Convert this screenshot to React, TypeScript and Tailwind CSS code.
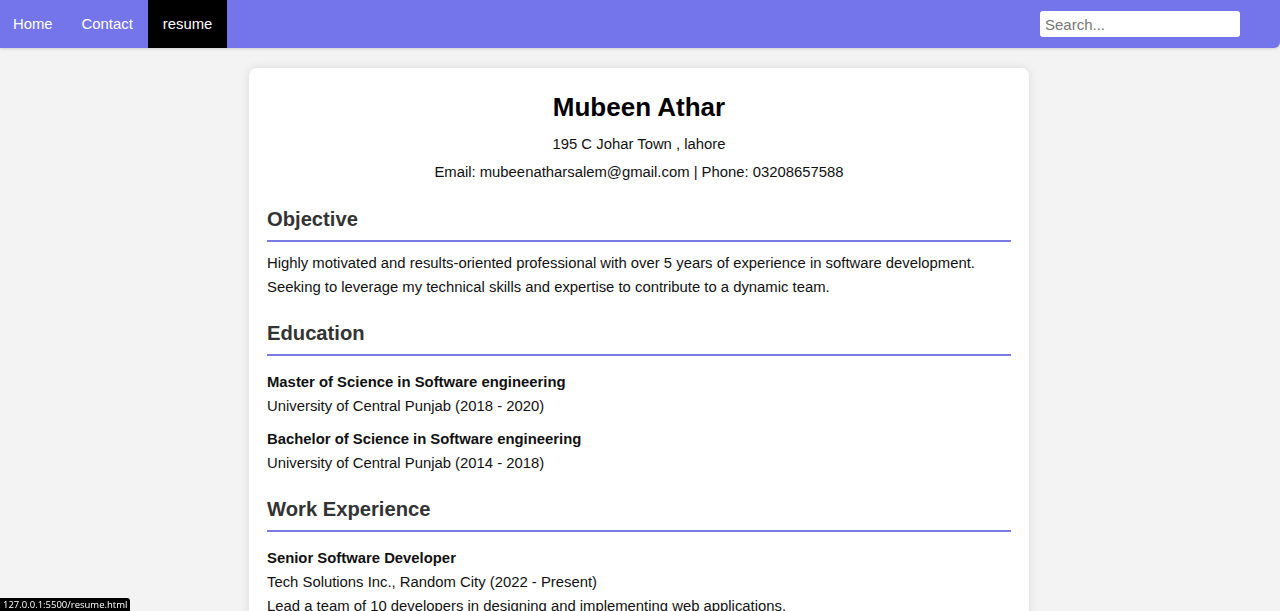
import React from "react";

export default function App() {
  const font = { fontFamily: '"Liberation Sans", Arial, sans-serif' };
  return (
    <div className="min-h-[611px] bg-[#f4f3f4] text-[14.85px] text-[#111]" style={font}>
      <nav className="flex h-[48px] items-stretch justify-between rounded-br-[6px] bg-[#7474eb] shadow-[0_1px_3px_rgba(0,0,0,0.15)]">
        <div className="flex items-stretch">
          <a className="flex items-center pl-[13px] pr-[14px] text-white">Home</a>
          <a className="flex items-center px-[15px] text-white">Contact</a>
          <a className="flex items-center bg-black px-[15px] text-white">resume</a>
        </div>
        <div className="flex items-center pr-[40px]">
          <input
            className="h-[26px] w-[200px] rounded-[3px] bg-white px-[5px] text-[15px] text-[#333] outline-none placeholder:text-[#777]"
            placeholder="Search..."
            style={font}
          />
        </div>
      </nav>

      <main className="mx-auto mt-[20px] w-[780px] -translate-x-[1px] rounded-[8px] bg-white px-[18px] pt-[24px] pb-[20px] shadow-[0_0_10px_rgba(0,0,0,0.1)]">
        <h1 className="text-center text-[26px] font-bold leading-[30px] text-black">Mubeen Athar</h1>
        <p className="mt-[10px] text-center leading-[24px]">195 C Johar Town , lahore</p>
        <p className="mt-[4px] text-center leading-[24px]">
          Email: mubeenatharsalem@gmail.com | Phone: 03208657588
        </p>

        <h2 className="mt-[23px] border-b-2 border-[#7b7be4] pb-[9px] text-[20.2px] font-bold leading-[24px] text-[#333]">
          Objective
        </h2>
        <p className="mt-[9px] leading-[24px]">
          Highly motivated and results-oriented professional with over 5 years of experience in software development.
          Seeking to leverage my technical skills and expertise to contribute to a dynamic team.
        </p>

        <h2 className="mt-[22px] border-b-2 border-[#7b7be4] pb-[9px] text-[20.2px] font-bold leading-[24px] text-[#333]">
          Education
        </h2>
        <div className="mt-[14px]">
          <p className="font-bold leading-[24px]">Master of Science in Software engineering</p>
          <p className="leading-[24px]">University of Central Punjab (2018 - 2020)</p>
        </div>
        <div className="mt-[9px]">
          <p className="font-bold leading-[24px]">Bachelor of Science in Software engineering</p>
          <p className="leading-[24px]">University of Central Punjab (2014 - 2018)</p>
        </div>

        <h2 className="mt-[22px] border-b-2 border-[#7b7be4] pb-[9px] text-[20.2px] font-bold leading-[24px] text-[#333]">
          Work Experience
        </h2>
        <div className="mt-[14px]">
          <p className="font-bold leading-[24px]">Senior Software Developer</p>
          <p className="leading-[24px]">Tech Solutions Inc., Random City (2022 - Present)</p>
          <p className="leading-[24px]">Lead a team of 10 developers in designing and implementing web applications.</p>
        </div>
      </main>

      <div className="fixed bottom-0 left-0 rounded-tr-[3px] bg-black px-[3px] text-[9.5px] leading-[13px] text-white" style={{ fontFamily: '"Open Sans", sans-serif' }}>
        127.0.0.1:5500/resume.html
      </div>
    </div>
  );
}
